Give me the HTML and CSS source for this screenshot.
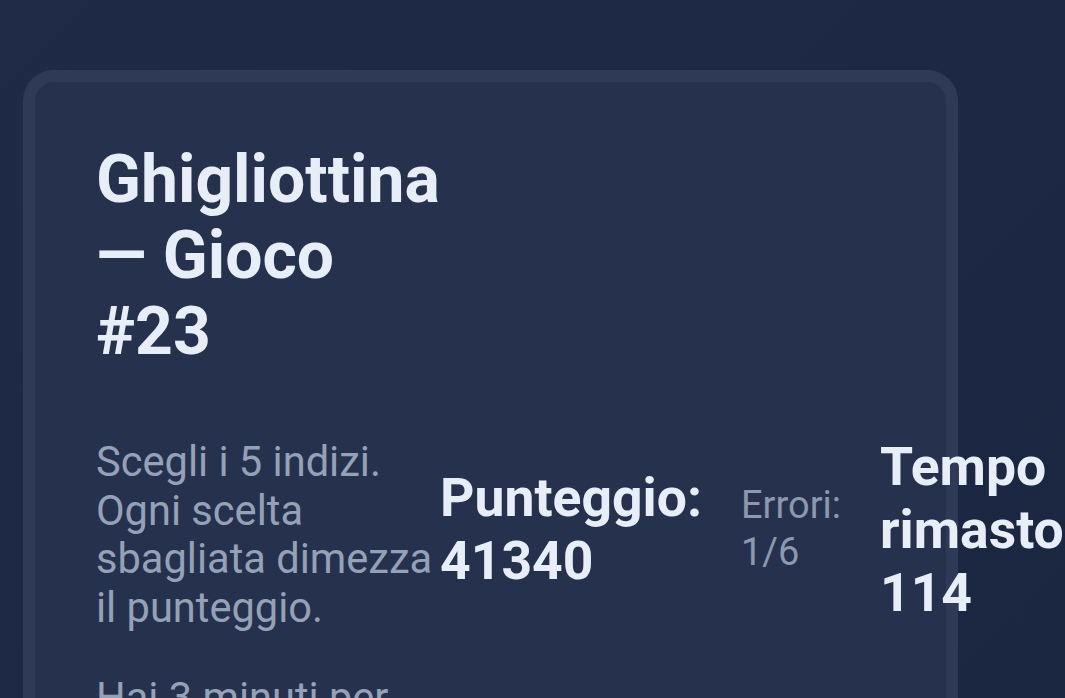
FILE: index.html
```html
<!DOCTYPE html>
<html lang="it">
<head>
<meta charset="utf-8">
<title>Ghigliottina — Gioco #23</title>
<link rel="stylesheet" href="styles.css">
</head>
<body>
<main class="page">
  <section class="card">
    <h1 class="title">Ghigliottina — Gioco #23</h1>
    <div class="intro">
      <p class="desc">Scegli i 5 indizi. Ogni scelta sbagliata dimezza il punteggio.</p>
      <div class="stats">
        <div class="stat stat-strong">Punteggio: 41340</div>
        <div class="stat stat-muted">Errori: 1/6</div>
        <div class="stat stat-strong">Tempo rimasto 114</div>
      </div>
    </div>
    <p class="desc desc-more">Hai 3 minuti per trovare la parola che lega tutti gli indizi.</p>
  </section>
</main>
</body>
</html>
```

FILE: styles.css
```css
html, body {
  margin: 0;
  padding: 0;
}

body {
  width: 1065px;
  height: 698px;
  overflow: hidden;
  background: linear-gradient(135deg, #1f2a46 0%, #1d2844 50%, #1b2641 100%);
  font-family: Roboto, "Noto Sans", "Liberation Sans", sans-serif;
  color: #e6edf7;
}

.page {
  padding: 70px 0 0 23px;
}

.card {
  width: 935px;
  box-sizing: border-box;
  min-height: 800px;
  background: #26324d;
  border: 12px solid #2f3b56;
  border-radius: 31px;
  padding: 60px 0 0 61px;
}

.title {
  margin: 0;
  width: 344px;
  font-size: 66px;
  line-height: 76px;
  font-weight: 700;
  color: #e8eef8;
}

.intro {
  display: flex;
  align-items: flex-start;
  margin-top: 68px;
}

.desc {
  margin: 0;
  width: 344px;
  flex-shrink: 0;
  font-size: 41.6px;
  line-height: 48.5px;
  color: #95a1b6;
}

.desc-more {
  margin-top: 42px;
}

.stats {
  display: flex;
  align-items: center;
  gap: 39px;
  height: 194px;
  margin-top: -6px;
}

.stat {
  width: min-content;
  flex-shrink: 0;
}

.stat-strong {
  font-size: 53.5px;
  line-height: 63px;
  font-weight: 700;
  color: #e8eef8;
}

.stat-muted {
  font-size: 38px;
  line-height: 47px;
  color: #8c98ad;
}
```
